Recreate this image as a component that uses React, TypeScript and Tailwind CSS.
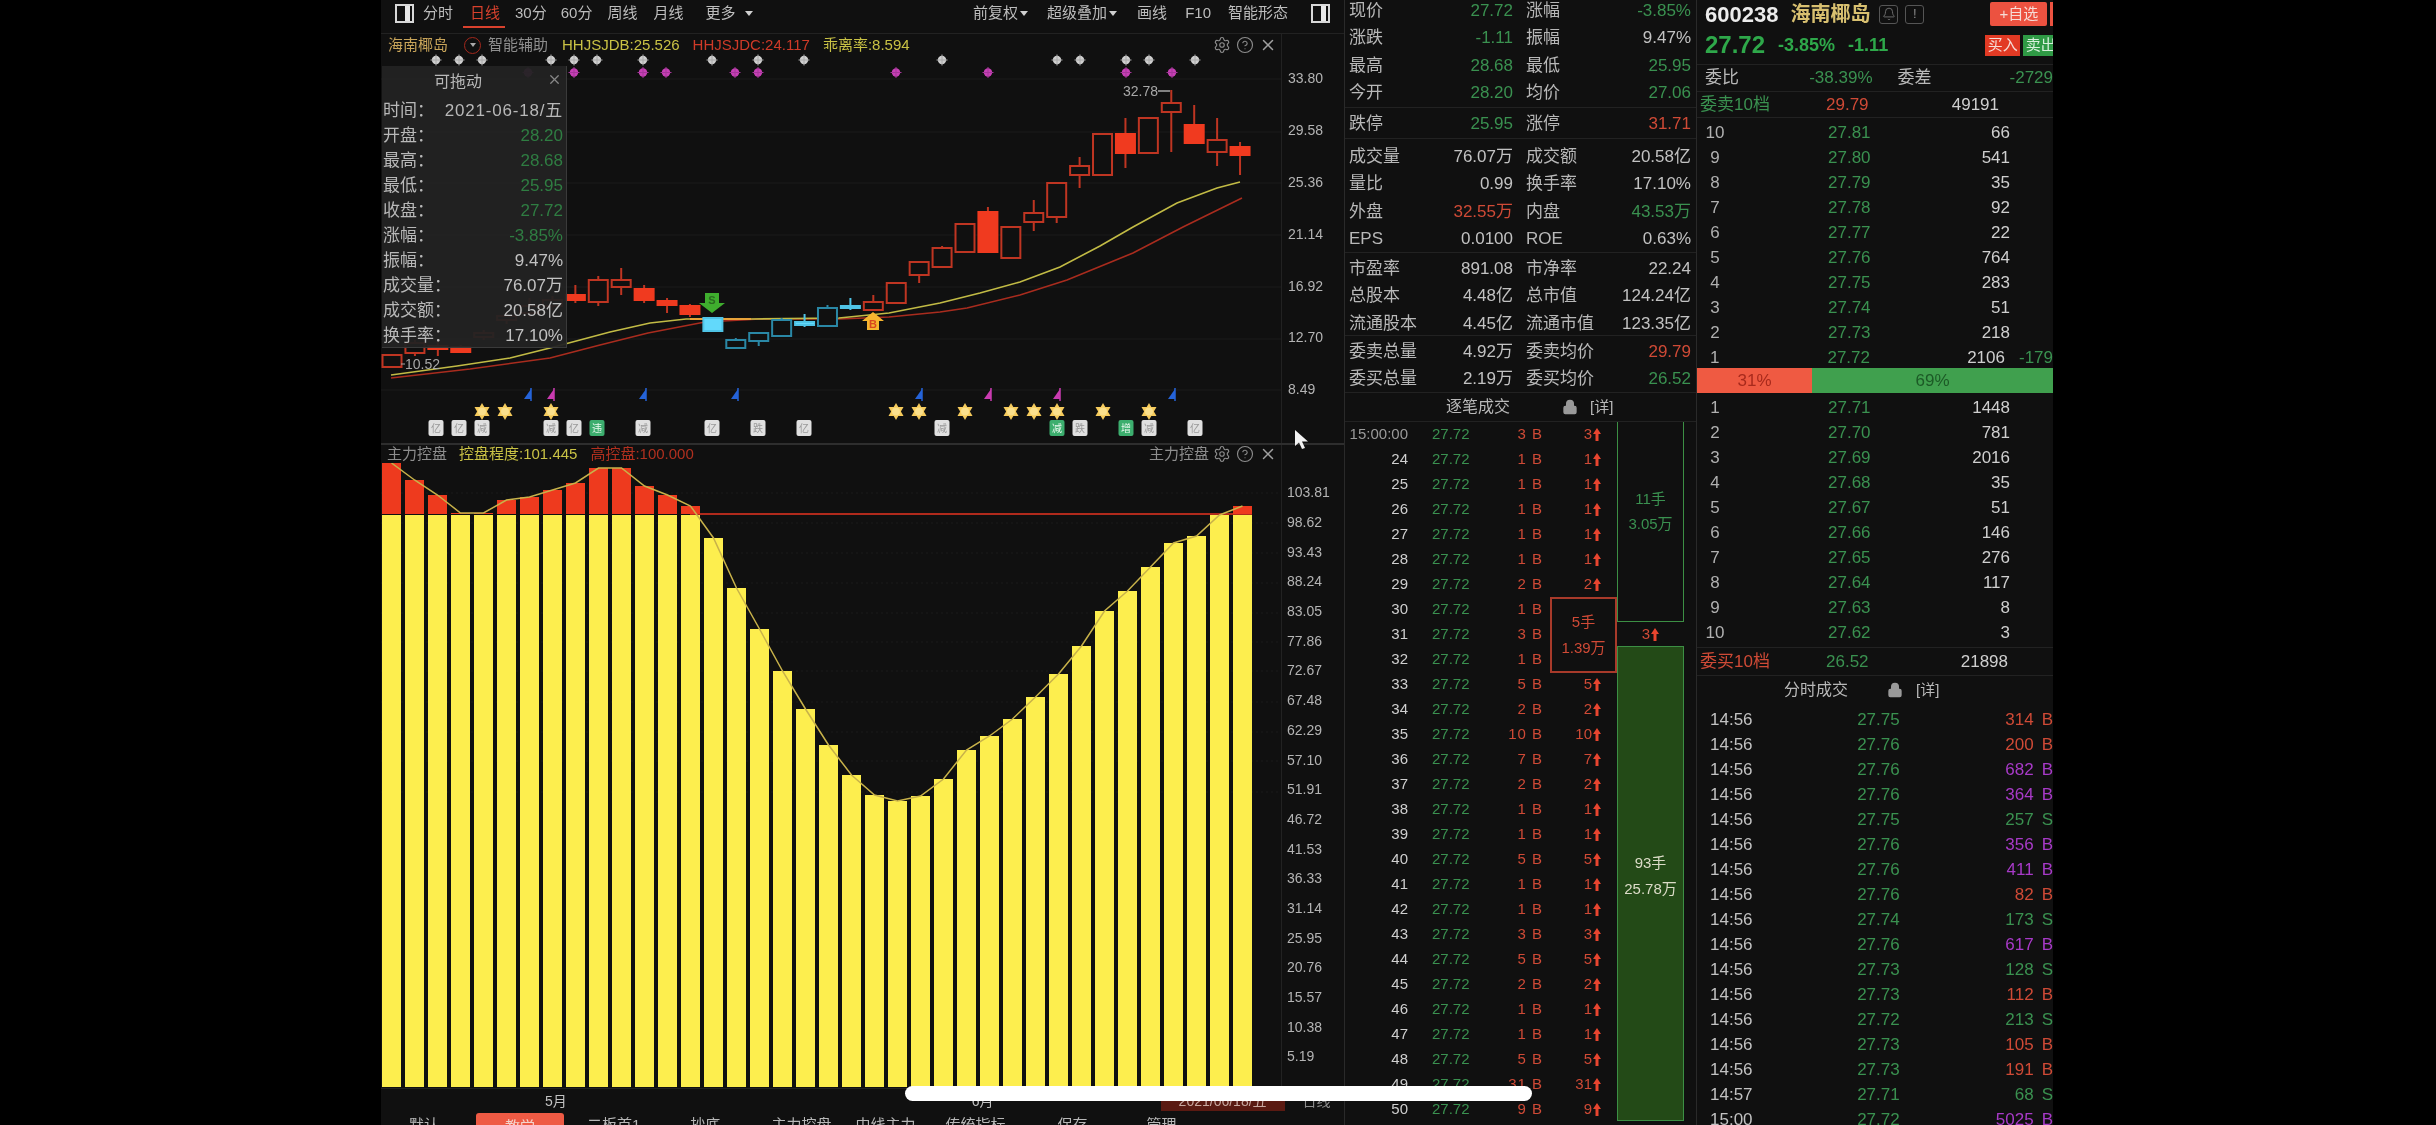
import React from 'react';
import { Bell, CircleHelp, Lock, Settings, X } from 'lucide-react';

const GREEN = 'text-[#3a9150]';
const RED = 'text-[#cf4a36]';
const GREY = 'text-[#c2c2c2]';

// top, bottom, wick top, wick bottom, style (o outline, f filled, c cyan outline, b cyan filled)
const candles: [number, number, number, number, string][] = [
  [355, 367, 355, 367, 'o'], [343, 353, 340, 356, 'o'], [346, 349, 340, 356, 'f'], [347, 352, 345, 353, 'f'],
  [333, 337, 330, 340, 'o'], [316, 320, 312, 324, 'o'], [306, 313, 298, 317, 'o'], [300, 306, 296, 310, 'o'],
  [295, 300, 285, 303, 'f'], [280, 302, 276, 306, 'o'], [280, 287, 268, 295, 'o'], [289, 300, 285, 303, 'f'],
  [301, 305, 298, 313, 'f'], [306, 314, 304, 317, 'f'], [318, 331, 318, 331, 'b'], [340, 348, 338, 348, 'c'],
  [333, 341, 332, 346, 'c'], [320, 336, 318, 336, 'c'], [322, 325, 314, 327, 'b'], [308, 326, 305, 326, 'c'],
  [306, 308, 298, 310, 'b'], [302, 310, 295, 310, 'o'], [283, 303, 283, 303, 'o'], [262, 275, 262, 283, 'o'],
  [248, 267, 246, 267, 'o'], [224, 252, 224, 252, 'o'], [212, 252, 207, 252, 'f'], [227, 258, 227, 258, 'o'],
  [213, 222, 200, 231, 'o'], [183, 217, 183, 223, 'o'], [166, 175, 157, 188, 'o'], [134, 175, 134, 175, 'o'],
  [134, 153, 118, 168, 'f'], [118, 153, 118, 153, 'o'], [103, 112, 90, 152, 'o'], [125, 143, 105, 143, 'f'],
  [140, 152, 118, 166, 'o'], [147, 155, 142, 175, 'f'],
];

const ctrlTops = [463, 480, 495, 513, 513, 500, 497, 490, 483, 468, 468, 486, 495, 506, 538, 588, 629, 671, 709, 745, 775, 795, 801, 796, 779, 750, 736, 719, 697, 674, 646, 611, 591, 567, 543, 536, 515, 506];

const greyDots = [2, 3, 4, 7, 8, 9, 11, 14, 16, 18, 24, 29, 30, 32, 33, 35];
const pinkDots = [6, 8, 11, 12, 15, 16, 22, 26, 32, 34];
const flags: [number, string][] = [[6, '#2563d8'], [7, '#c93bb0'], [11, '#2563d8'], [15, '#2563d8'], [23, '#2563d8'], [26, '#c93bb0'], [29, '#c93bb0'], [34, '#2563d8']];
const stars = [4, 5, 7, 22, 23, 25, 27, 28, 29, 31, 33];
const badges: [number, string, boolean][] = [
  [2, '亿', false], [3, '亿', false], [4, '减', false], [7, '减', false], [8, '亿', false], [9, '违', true],
  [11, '减', false], [14, '亿', false], [16, '跌', false], [18, '亿', false], [24, '减', false], [29, '减', true],
  [30, '跌', false], [32, '增', true], [33, '减', false], [35, '亿', false],
];

const mark = (i: number) => 390 + 23 * i;

const KChart = () => (
  <svg viewBox="381 54 900 389" className="block h-[389px] w-[900px]">
    {[79, 132, 183, 235, 287, 339, 390].map((y) => (
      <line key={y} x1="381" x2="1281" y1={y} y2={y} stroke="#1b1b1b" />
    ))}
    {greyDots.map((i) => (
      <g key={i} stroke="#a8a8a8" strokeWidth="1">
        <circle cx={mark(i)} cy="60" r="4.2" fill="#cfcfcf" stroke="none" />
        <line x1={mark(i) - 5.5} x2={mark(i) + 5.5} y1="60" y2="60" />
        <line x1={mark(i)} x2={mark(i)} y1="54.5" y2="65.5" />
      </g>
    ))}
    {pinkDots.map((i) => (
      <g key={i} stroke="#a5369a" strokeWidth="1">
        <circle cx={mark(i)} cy="72.5" r="4.2" fill="#c840b6" stroke="none" />
        <line x1={mark(i) - 5.5} x2={mark(i) + 5.5} y1="72.5" y2="72.5" />
        <line x1={mark(i)} x2={mark(i)} y1="67" y2="78" />
      </g>
    ))}
    <polyline fill="none" stroke="#a92c1e" strokeWidth="1.6" points="391,378 470,369 550,358 600,345 648,333 705,322 760,319 839,319 889,317 940,312 967,308 1020,295 1067,280 1133,253 1183,227 1242,198" />
    <polyline fill="none" stroke="#c2bb45" strokeWidth="1.6" points="391,375 457,366 510,358 550,348 610,332 650,323 686,319 751,319 839,318 889,313 940,303 980,293 1020,282 1060,267 1100,246 1133,227 1177,203 1217,188 1240,182" />
    <line x1="690" x2="751" y1="319" y2="319" stroke="#e8a33a" strokeWidth="2" />
    {candles.map(([top, bot, wt, wb, k], i) => {
      const cx = 392 + 22.92 * i;
      const cyan = k === 'b' || k === 'c';
      const stroke = k === 'b' ? '#4fc4e6' : k === 'c' ? '#2a88a6' : k === 'f' ? '#f03a1f' : '#bf3522';
      const fill = k === 'b' ? '#62d9fb' : k === 'f' ? '#f03a1f' : '#101010';
      return (
        <g key={i}>
          <line x1={cx} x2={cx} y1={wt} y2={wb} stroke={cyan ? stroke : '#bf3522'} strokeWidth="2" />
          <rect x={cx - 9.5} y={top} width="19" height={bot - top} fill={fill} stroke={stroke} strokeWidth="2" />
        </g>
      );
    })}
    <text x="1123" y="96" fontSize="14" fill="#a8a8a8">32.78</text>
    <line x1="1158" x2="1170" y1="91" y2="91" stroke="#a8a8a8" strokeWidth="1.5" />
    <text x="405" y="369" fontSize="14" fill="#a8a8a8">10.52</text>
    <line x1="401" x2="405" y1="364" y2="364" stroke="#a8a8a8" />
    <polygon points="705,293 719,293 719,303 725,303 712,313 699,303 705,303" fill="#3fae2e" />
    <text x="712" y="304" fontSize="11" fontWeight="700" textAnchor="middle" fill="#2a6a20">S</text>
    <polygon points="873,312 884,321 879,321 879,330 867,330 867,321 862,321" fill="#f6b52f" />
    <text x="873" y="328" fontSize="11" fontWeight="700" textAnchor="middle" fill="#d9471f">B</text>
    {flags.map(([i, c]) => (
      <g key={i}>
        <polygon points={`${mark(i) + 3},389 ${mark(i) - 4},399 ${mark(i) + 3},399`} fill={c} />
        <line x1={mark(i) + 3} x2={mark(i) + 3} y1="388" y2="401" stroke={c} strokeWidth="1.5" />
      </g>
    ))}
    {stars.map((i) => (
      <g key={i} fill="#f6cb5c">
        <polygon points={`${mark(i)},403 ${mark(i) + 7.5},416 ${mark(i) - 7.5},416`} />
        <polygon points={`${mark(i)},420 ${mark(i) + 7.5},407 ${mark(i) - 7.5},407`} />
        <circle cx={mark(i)} cy="411.5" r="4" fill="#fbe08c" />
      </g>
    ))}
    {badges.map(([i, t, on]) => (
      <g key={i}>
        <rect x={mark(i) - 7.5} y="420" width="15" height="16" rx="2" fill={on ? '#3cae6e' : '#e0e0e0'} />
        <text x={mark(i)} y="432" fontSize="10" textAnchor="middle" fill={on ? '#e8f8ee' : '#999'}>{t}</text>
      </g>
    ))}
  </svg>
);

const SubChart = () => (
  <svg viewBox="381 463 900 625" className="block h-[625px] w-[900px]">
    {[493, 523, 553, 583, 613, 642, 671, 702, 732, 761, 792].map((y) => (
      <line key={y} x1="381" x2="1281" y1={y} y2={y} stroke="#1b1b1b" strokeDasharray="2 3" />
    ))}
    <line x1="690" x2="1252" y1="514" y2="514" stroke="#b02a1c" strokeWidth="2" />
    {ctrlTops.map((top, i) => (
      <g key={i}>
        {top < 514 && <rect x={382 + 23 * i} y={top} width="19" height={514 - top} fill="#ee3a1e" />}
        <rect x={382 + 23 * i} y={Math.max(top, 515)} width="19" height={1087 - Math.max(top, 515)} fill="#fdee4e" />
      </g>
    ))}
    <polyline fill="none" stroke="#c8b24a" strokeWidth="1.5" points={ctrlTops.map((t, i) => `${391.5 + 23 * i},${t}`).join(' ')} />
  </svg>
);

const PanelIcon = ({ className }: { className: string }) => (
  <div className={`flex h-[19px] w-[19px] justify-end border-2 border-[#d8d8d8] bg-[#101010] pr-[2px] ${className}`}>
    <div className="w-[5px] bg-[#e8e8e8]" />
  </div>
);

const ChartTools = () => (
  <div className="flex items-center gap-[5px] text-[#8d8d8d]">
    <Settings size={18} strokeWidth={1.5} />
    <CircleHelp size={18} strokeWidth={1.5} />
    <X size={18} strokeWidth={2} className="text-[#a0a0a0]" />
  </div>
);

const Caret = () => (
  <span className="ml-[2px] inline-block h-0 w-0 border-x-[4px] border-t-[5px] border-x-transparent border-t-[#d0d0d0]" />
);

const Toolbar = () => (
  <div className="flex h-[34px] items-center border-b border-[#222] pb-[6px] text-[15px] text-[#bdbdbd]">
    <PanelIcon className="ml-[14px]" />
    <span className="ml-[9px]">分时</span>
    <span className="relative ml-[17px] text-[#d8412d]">
      日线
      <span className="absolute -left-[7px] -right-[5px] bottom-[-3px] h-[2px] bg-[#d8412d]" />
    </span>
    <span className="ml-[15px]">30分</span>
    <span className="ml-[14px]">60分</span>
    <span className="ml-[15px]">周线</span>
    <span className="ml-[16px]">月线</span>
    <span className="ml-[22px]">更多</span>
    <span className="ml-[8px] flex"><Caret /></span>
    <span className="ml-auto flex items-center">前复权<Caret /></span>
    <span className="ml-[19px] flex items-center">超级叠加<Caret /></span>
    <span className="ml-[20px]">画线</span>
    <span className="ml-[18px]">F10</span>
    <span className="ml-[17px]">智能形态</span>
    <PanelIcon className="ml-[23px] mr-[14px]" />
  </div>
);

const popupRows: [string, string, string][] = [
  ['开盘：', '28.20', 'text-[#2f7d42]'], ['最高：', '28.68', 'text-[#2f7d42]'], ['最低：', '25.95', 'text-[#2f7d42]'],
  ['收盘：', '27.72', 'text-[#2f7d42]'], ['涨幅：', '-3.85%', 'text-[#2f7d42]'], ['振幅：', '9.47%', GREY],
  ['成交量：', '76.07万', GREY], ['成交额：', '20.58亿', GREY], ['换手率：', '17.10%', GREY],
];

const Popup = () => (
  <div className="absolute left-[1px] top-[66px] h-[282px] w-[185px] border-r border-b border-[#3a3a3a] bg-[#232323]/95 pl-[1px] pr-[3px] text-[17px] text-[#b8b8b8]">
    <div className="relative flex h-[32px] items-center justify-center pr-[30px] text-[16px]">
      可拖动
      <X size={15} className="absolute right-[1px] top-[6px] text-[#888]" />
    </div>
    <div className="flex h-[25px] items-center justify-between">
      <span>时间：</span><span className="tracking-[0.8px]">2021-06-18/五</span>
    </div>
    {popupRows.map(([l, v, c]) => (
      <div key={l} className="flex h-[25px] items-center justify-between">
        <span>{l}</span><span className={c}>{v}</span>
      </div>
    ))}
  </div>
);

const kAxis = ['33.80', '29.58', '25.36', '21.14', '16.92', '12.70', '8.49'];
const subAxis = ['103.81', '98.62', '93.43', '88.24', '83.05', '77.86', '72.67', '67.48', '62.29', '57.10', '51.91', '46.72', '41.53', '36.33', '31.14', '25.95', '20.76', '15.57', '10.38', '5.19'];

const ChartColumn = () => (
  <div className="relative w-[964px] shrink-0 border-r border-[#2a2a2a]">
    <Toolbar />
    <div className="flex h-[409px]">
      <div className="w-[900px]">
        <div className="flex h-[18px] mt-[2px] items-center text-[15px]">
          <span className="ml-[7px] text-[#c9a55a]">海南椰岛</span>
          <span className="ml-[16px] flex h-[17px] w-[17px] items-center justify-center rounded-full border border-[#a3281c]">
            <span className="h-0 w-0 border-x-[3px] border-t-[4px] border-x-transparent border-t-[#aaa]" />
          </span>
          <span className="ml-[7px] text-[#8e8e8e]">智能辅助</span>
          <span className="ml-[14px] text-[#c9c245]">HHJSJDB:25.526</span>
          <span className="ml-[13px] text-[#cf3a28]">HHJSJDC:24.117</span>
          <span className="ml-[13px] text-[#c9c245]">乖离率:8.594</span>
          <span className="ml-auto mr-[4px]"><ChartTools /></span>
        </div>
        <KChart />
      </div>
      <div className="w-[63px] border-l border-[#222] pl-[6px] pt-[19px] text-[14px] text-[#b4b4b4]">
        {kAxis.map((t) => (
          <div key={t} className="flex h-[51.8px] items-center">{t}</div>
        ))}
      </div>
    </div>
    <Popup />
    <div className="h-[2px] bg-[#2e2e2e]" />
    <div className="flex h-[643px]">
      <div className="w-[900px]">
        <div className="flex h-[18px] items-center text-[15px]">
          <span className="ml-[6px] text-[#8e8e8e]">主力控盘</span>
          <span className="ml-[12px] text-[#c9c245]">控盘程度:101.445</span>
          <span className="ml-[13px] text-[#b0301f]">高控盘:100.000</span>
          <span className="ml-auto mr-[4px] flex items-center gap-[4px] text-[#8e8e8e]">主力控盘<ChartTools /></span>
        </div>
        <SubChart />
      </div>
      <div className="w-[63px] border-l border-[#222] pl-[5px] pt-[33px] text-[14px] text-[#b4b4b4]">
        {subAxis.map((t) => (
          <div key={t} className="flex h-[29.7px] items-center">{t}</div>
        ))}
      </div>
    </div>
    <div className="flex h-[23px] items-center border-t border-[#222] pt-[2px] text-[14px] text-[#c2c2c2]">
      <span className="ml-[164px]">5月</span>
      <span className="ml-[405px]">6月</span>
      <span className="ml-[167px] flex h-full w-[124px] items-center justify-center bg-[#5a1a12] text-[#c8a8a0]">2021/06/18/五</span>
      <span className="ml-[18px] text-[#8e8e8e]">日线</span>
    </div>
    <div className="flex h-[28px] items-center text-[15px] text-[#b8b8b8]">
      <span className="ml-[28px]">默认</span>
      <span className="ml-[37px] mt-[4px] flex h-[28px] w-[88px] items-center justify-center rounded-t-[3px] bg-[#ee5a44] text-[#f4d4cc]">教学</span>
      <span className="ml-[23px]">二板首1</span>
      <span className="ml-[50px]">抄底</span>
      <span className="ml-[51px]">主力控盘</span>
      <span className="ml-[24px]">中线主力</span>
      <span className="ml-[30px]">传统指标</span>
      <span className="ml-[52px]">保存</span>
      <span className="ml-[59px]">管理</span>
    </div>
  </div>
);

type Stat = [string, string, string, string, string, string];

const statGroups: { box: string; rows: Stat[] }[] = [
  {
    box: 'h-[111px] -mt-[3px]',
    rows: [
      ['现价', '27.72', GREEN, '涨幅', '-3.85%', GREEN],
      ['涨跌', '-1.11', GREEN, '振幅', '9.47%', GREY],
      ['最高', '28.68', GREEN, '最低', '25.95', GREEN],
      ['今开', '28.20', GREEN, '均价', '27.06', GREEN],
    ],
  },
  { box: 'h-[31px] pt-[2px]', rows: [['跌停', '25.95', GREEN, '涨停', '31.71', RED]] },
  {
    box: 'h-[114px] pt-[4px]',
    rows: [
      ['成交量', '76.07万', GREY, '成交额', '20.58亿', GREY],
      ['量比', '0.99', GREY, '换手率', '17.10%', GREY],
      ['外盘', '32.55万', RED, '内盘', '43.53万', GREEN],
      ['EPS', '0.0100', GREY, 'ROE', '0.63%', GREY],
    ],
  },
  {
    box: 'h-[83px] pt-[2px]',
    rows: [
      ['市盈率', '891.08', GREY, '市净率', '22.24', GREY],
      ['总股本', '4.48亿', GREY, '总市值', '124.24亿', GREY],
      ['流通股本', '4.45亿', GREY, '流通市值', '123.35亿', GREY],
    ],
  },
  {
    box: 'h-[57px] pt-[2px]',
    rows: [
      ['委卖总量', '4.92万', GREY, '委卖均价', '29.79', RED],
      ['委买总量', '2.19万', GREY, '委买均价', '26.52', GREEN],
    ],
  },
];

const trades: [string, number][] = [
  ['15:00:00', 3], ['24', 1], ['25', 1], ['26', 1], ['27', 1], ['28', 1], ['29', 2], ['30', 1], ['31', 3], ['32', 1],
  ['33', 5], ['34', 2], ['35', 10], ['36', 7], ['37', 2], ['38', 1], ['39', 1], ['40', 5], ['41', 1], ['42', 1],
  ['43', 3], ['44', 5], ['45', 2], ['46', 1], ['47', 1], ['48', 5], ['49', 31], ['50', 9],
];
// these rows sit under the big order box, so their arrow column is not visible
const underBox = ['30', '31', '32'];

const UpArrow = () => (
  <svg viewBox="0 0 8 13" className="ml-[1px] inline-block h-[13px] w-[8px] align-[-2px]">
    <polygon points="4,0 8,6 5.5,6 5.5,13 2.5,13 2.5,6 0,6" fill="#e8452f" />
  </svg>
);

const StatsColumn = () => (
  <div className="relative w-[352px] shrink-0 border-r border-[#2a2a2a] text-[17px]">
    {statGroups.map((g) => (
      <div key={g.rows[0][0]} className={`border-b border-[#222] ${g.box}`}>
        {g.rows.map(([l1, v1, c1, l2, v2, c2]) => (
          <div key={l1} className="flex h-[27.4px] items-center pl-[4px] text-[#b8b8b8]">
            <div className="flex w-[164px] justify-between"><span>{l1}</span><span className={c1}>{v1}</span></div>
            <div className="ml-[13px] flex w-[165px] justify-between"><span>{l2}</span><span className={c2}>{v2}</span></div>
          </div>
        ))}
      </div>
    ))}
    <div className="flex h-[29px] items-center border-b border-[#222] text-[15px] text-[#b8b8b8]">
      <span className="ml-[101px] text-[16px]">逐笔成交</span>
      <Lock size={16} fill="#9a9a9a" className="ml-[52px] text-[#9a9a9a]" />
      <span className="ml-[12px]">[详]</span>
    </div>
    <div className="flex h-[702px]">
      <div className="w-[256px] text-[15px]">
        {trades.map(([t, q], i) => (
          <div key={t} className="flex h-[25px] items-center">
            <span className={`w-[63px] text-right ${i === 0 ? 'text-[#9a9a9a]' : 'text-[#cfcfcf]'}`}>{t}</span>
            <span className={`ml-[24px] w-[40px] ${GREEN}`}>27.72</span>
            <span className={`w-[71px] text-right tracking-[1px] ${RED}`}>{q} B</span>
            {!underBox.includes(t) && <span className={`w-[58px] text-right ${RED}`}>{q}<UpArrow /></span>}
          </div>
        ))}
      </div>
      <div className="ml-[16px] flex w-[67px] flex-col text-[15px]">
        <div className="flex h-[200px] flex-col items-center justify-center gap-[3px] border-x border-b border-[#3c8f44] pb-[20px] text-[#3a9150]">
          <span>11手</span><span>3.05万</span>
        </div>
        <div className={`flex h-[24px] items-center justify-center ${RED}`}>3<UpArrow /></div>
        <div className="flex h-[475px] flex-col items-center justify-center gap-[3px] border border-[#3c8f44] bg-[#234a17] pb-[15px] text-[#dcdcc8]">
          <span>93手</span><span>25.78万</span>
        </div>
      </div>
    </div>
    <div className={`absolute left-[205px] top-[597px] flex h-[76px] w-[67px] flex-col items-center justify-center gap-[3px] border-2 border-[#a83a2a] bg-[#101010] text-[15px] ${RED}`}>
      <span>5手</span><span>1.39万</span>
    </div>
  </div>
);

const asks: [string, string, string][] = [
  ['10', '27.81', '66'], ['9', '27.80', '541'], ['8', '27.79', '35'], ['7', '27.78', '92'], ['6', '27.77', '22'],
  ['5', '27.76', '764'], ['4', '27.75', '283'], ['3', '27.74', '51'], ['2', '27.73', '218'], ['1', '27.72', '2106'],
];
const bids: [string, string, string][] = [
  ['1', '27.71', '1448'], ['2', '27.70', '781'], ['3', '27.69', '2016'], ['4', '27.68', '35'], ['5', '27.67', '51'],
  ['6', '27.66', '146'], ['7', '27.65', '276'], ['8', '27.64', '117'], ['9', '27.63', '8'], ['10', '27.62', '3'],
];

const PURPLE = 'text-[#a83ac8]';
const ticks: [string, string, string, string, string][] = [
  ['14:56', '27.75', '314', 'B', RED], ['14:56', '27.76', '200', 'B', RED], ['14:56', '27.76', '682', 'B', PURPLE],
  ['14:56', '27.76', '364', 'B', PURPLE], ['14:56', '27.75', '257', 'S', GREEN], ['14:56', '27.76', '356', 'B', PURPLE],
  ['14:56', '27.76', '411', 'B', PURPLE], ['14:56', '27.76', '82', 'B', RED], ['14:56', '27.74', '173', 'S', GREEN],
  ['14:56', '27.76', '617', 'B', PURPLE], ['14:56', '27.73', '128', 'S', GREEN], ['14:56', '27.73', '112', 'B', RED],
  ['14:56', '27.72', '213', 'S', GREEN], ['14:56', '27.73', '105', 'B', RED], ['14:56', '27.73', '191', 'B', RED],
  ['14:57', '27.71', '68', 'S', GREEN], ['15:00', '27.72', '5025', 'B', PURPLE],
];

const BookRow = ({ row, extra }: { row: [string, string, string]; extra?: string }) => (
  <div className="flex h-[25px] items-center">
    <span className="ml-[8px] w-[20px] text-center text-[#b0b0b0]">{row[0]}</span>
    <span className={`ml-[103px] w-[43px] ${GREEN}`}>{row[1]}</span>
    <span className="w-[139px] text-right text-[#cfcfcf]">{row[2]}</span>
    {extra && <span className={`ml-[14px] ${GREEN}`}>{extra}</span>}
  </div>
);

const BookColumn = () => (
  <div className="w-[356px] shrink-0 overflow-hidden whitespace-nowrap text-[17px]">
    <div className="h-[65px] w-[420px] border-b border-[#222]">
      <div className="flex h-[28px] items-center pl-[8px]">
        <span className="text-[22px] font-bold text-[#ececec]">600238</span>
        <span className="ml-[12px] text-[20px] font-bold text-[#d8c070]">海南椰岛</span>
        <span className="ml-[9px] flex h-[19px] w-[19px] items-center justify-center rounded-[3px] border border-[#555] text-[#777]">
          <Bell size={14} strokeWidth={1.5} />
        </span>
        <span className="ml-[7px] flex h-[19px] w-[19px] items-center justify-center rounded-[3px] border border-[#555] text-[13px] text-[#888]">!</span>
        <span className="ml-[66px] flex h-[24px] w-[57px] shrink-0 items-center justify-center rounded-[2px] bg-[#ec5240] text-[15px] text-[#f6dcd6]">+自选</span>
        <span className="ml-[3px] h-[24px] w-[20px] shrink-0 bg-[#ec5240]" />
      </div>
      <div className="flex h-[34px] items-center pl-[8px] font-bold text-[#2ea84a]">
        <span className="text-[24px]">27.72</span>
        <span className="ml-[13px] text-[18px]">-3.85%</span>
        <span className="ml-[13px] text-[18px]">-1.11</span>
        <span className="ml-[97px] flex h-[21px] w-[35px] shrink-0 items-center justify-center bg-[#e23a24] text-[15px] font-normal text-[#f6dcd6]">买入</span>
        <span className="ml-[3px] flex h-[21px] w-[35px] shrink-0 items-center justify-center bg-[#2f9a45] text-[15px] font-normal text-[#d8f0dc]">卖出</span>
      </div>
    </div>
    <div className="flex h-[27px] items-center border-b border-[#222] pl-[8px]">
      <span className="text-[#b8b8b8]">委比</span>
      <span className={`w-[134px] text-right ${GREEN}`}>-38.39%</span>
      <span className="ml-[25px] text-[#b8b8b8]">委差</span>
      <span className={`ml-[78px] ${GREEN}`}>-2729</span>
    </div>
    <div className="flex h-[26px] items-center border-b border-[#222] pl-[3px]">
      <span className={`w-[125px] ${GREEN}`}>委卖10档</span>
      <span className={`ml-[1px] w-[43px] ${RED}`}>29.79</span>
      <span className="w-[130px] text-right text-[#cfcfcf]">49191</span>
    </div>
    <div className="pt-[2px]">
      {asks.map((r) => (
        <BookRow key={r[0]} row={r} extra={r[0] === '1' ? '-179' : undefined} />
      ))}
    </div>
    <div className="-mt-[2px] flex h-[25px] items-center text-center">
      <div className="flex h-full w-[115px] items-center justify-center bg-[#ef5a42] text-[#a82a1c]">31%</div>
      <div className="flex h-full w-[241px] items-center justify-center bg-[#40a04e] text-[#1c5a26]">69%</div>
    </div>
    <div className="pt-[2px]">
      {bids.map((r) => (
        <BookRow key={r[0]} row={r} />
      ))}
    </div>
    <div className="mt-[2px] flex h-[29px] items-center border-y border-[#222] pl-[3px]">
      <span className={`w-[125px] ${RED}`}>委买10档</span>
      <span className={`ml-[1px] w-[43px] ${GREEN}`}>26.52</span>
      <span className="w-[139px] text-right text-[#cfcfcf]">21898</span>
    </div>
    <div className="flex h-[28px] items-center text-[15px] text-[#b8b8b8]">
      <span className="ml-[87px] text-[16px]">分时成交</span>
      <Lock size={16} fill="#9a9a9a" className="ml-[39px] text-[#9a9a9a]" />
      <span className="ml-[13px]">[详]</span>
    </div>
    <div className="pt-[3px]">
      {ticks.map(([t, p, v, s, c], i) => (
        <div key={i} className="flex h-[25px] items-center whitespace-nowrap">
          <span className="ml-[13px] w-[44px] text-[#c2c2c2]">{t}</span>
          <span className={`ml-[104px] w-[44px] ${GREEN}`}>{p}</span>
          <span className={`w-[136px] text-right ${c}`}>{v}</span>
          <span className={`ml-[8px] ${c}`}>{s}</span>
        </div>
      ))}
    </div>
  </div>
);

export default function App() {
  return (
    <div className="relative flex h-[1125px] w-[2436px] overflow-hidden bg-black font-['Liberation_Sans','Noto_Sans_CJK_SC',sans-serif] blur-[0.4px]">
      <div className="w-[381px] shrink-0" />
      <div className="flex w-[1672px] shrink-0 bg-[#101010]">
        <ChartColumn />
        <StatsColumn />
        <BookColumn />
      </div>
      {/* recording overlays: pointer and home indicator */}
      <svg viewBox="0 0 14 20" className="absolute left-[1295px] top-[430px] h-[20px] w-[14px]">
        <polygon points="0,0 0,16 4,12.5 7,19 10,18 7,11.5 13,11.5" fill="#f2f2f2" />
      </svg>
      <div className="absolute left-[905px] top-[1086px] h-[15px] w-[627px] rounded-full bg-white" />
    </div>
  );
}
